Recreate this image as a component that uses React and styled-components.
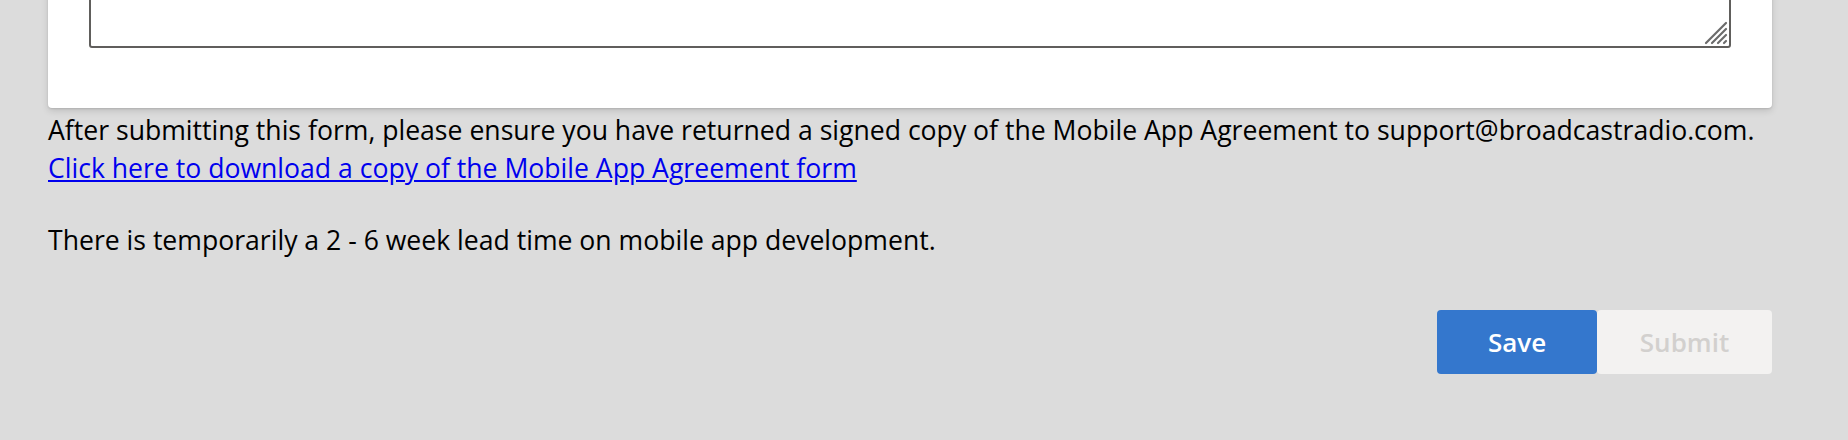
import styled, { createGlobalStyle } from "styled-components";

const GlobalStyle = createGlobalStyle`
  body {
    margin: 0;
    background: #dcdcdc;
    font-family: "Open Sans", "Noto Sans", sans-serif;
    overflow: hidden;
  }
`;

const Page = styled.div`
  padding: 0 76px 0 48px;
`;

const Card = styled.div`
  margin-top: -60px;
  padding: 0 41px 60px;
  background: #ffffff;
  border-radius: 4px;
  box-shadow: 0 3px 7px rgba(0, 0, 0, 0.13), 0 1px 2px rgba(0, 0, 0, 0.11);
`;

const TextAreaBox = styled.div`
  position: relative;
  height: 108px;
`;

const TextArea = styled.textarea`
  box-sizing: border-box;
  display: block;
  width: 100%;
  height: 100%;
  border: 2px solid #605e5c;
  border-radius: 3px;
  resize: none;
  outline: none;
  font: inherit;
`;

const Grip = styled.svg`
  position: absolute;
  right: 3px;
  bottom: 3px;
  width: 24px;
  height: 24px;
`;

const Notice = styled.p`
  margin: 3px 0 0;
  font-size: 26.6px;
  line-height: 38px;
  color: #000;
`;

const Link = styled.a`
  color: #0000ee;
  text-decoration: underline;
`;

const Note = styled(Notice)`
  margin-top: 34px;
`;

const Actions = styled.div`
  display: flex;
  justify-content: flex-end;
  margin-top: 51px;
`;

const Button = styled.button`
  height: 64px;
  width: ${(p) => p.$width}px;
  border: none;
  border-radius: 4px;
  font-family: inherit;
  font-size: 26px;
  font-weight: 600;
  background: ${(p) => (p.$primary ? "#3477cd" : "#f3f2f1")};
  color: ${(p) => (p.$primary ? "#ffffff" : "#d2d0ce")};
  cursor: ${(p) => (p.disabled ? "default" : "pointer")};
`;

function App() {
  return (
    <>
      <GlobalStyle />
      <Page>
        <Card>
          <TextAreaBox>
            <TextArea />
            <Grip viewBox="0 0 24 24">
              <g stroke="#6b6b6b" strokeWidth="2.2" strokeLinecap="round">
                <line x1="2" y1="22" x2="22" y2="2" />
                <line x1="8" y1="22" x2="22" y2="8" />
                <line x1="14" y1="22" x2="22" y2="14" />
                <line x1="20" y1="22" x2="22" y2="20" />
              </g>
            </Grip>
          </TextAreaBox>
        </Card>
        <Notice>
          After submitting this form, please ensure you have returned a signed
          copy of the Mobile App Agreement to support@broadcastradio.com.
          <br />
          <Link href="#">Click here to download a copy of the Mobile App Agreement form</Link>
        </Notice>
        <Note>There is temporarily a 2 - 6 week lead time on mobile app development.</Note>
        <Actions>
          <Button $primary $width={160}>Save</Button>
          <Button $width={175} disabled>Submit</Button>
        </Actions>
      </Page>
    </>
  );
}

export default App;
